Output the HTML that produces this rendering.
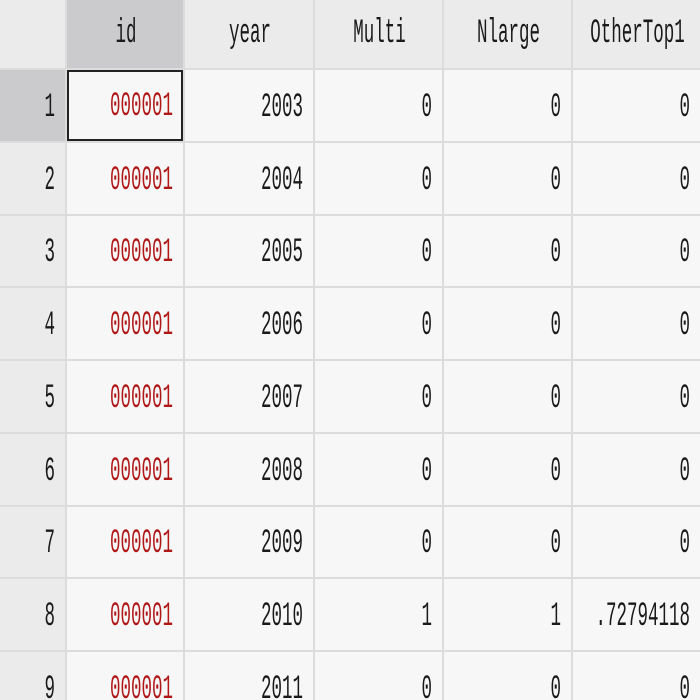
<!DOCTYPE html>
<html><head><style>
html{width:700px;height:700px;overflow:hidden;background:#f7f7f7;}
body{margin:0;width:700px;height:700px;overflow:hidden;background:#f7f7f7;position:relative;font-family:"Liberation Mono",monospace;}
.c{position:absolute;box-sizing:border-box;display:flex;align-items:center;justify-content:flex-end;padding-right:10px;padding-top:4px;font-size:17.5px;color:#1a1a1a;overflow:hidden;}
.c span{display:inline-block;transform:scaleY(1.95);}
.h{background:#ebebeb;justify-content:center;padding:0 0 0 2px;}
.r{background:#ebebeb;}
.red{color:#b01818;}
.vl{position:absolute;top:0;height:700px;width:2px;background:#dcdcdc;}
.hl{position:absolute;left:0;width:700px;height:2px;background:#dcdcdc;}
</style></head><body>
<div id="g"></div>
<script>
const cols=[0,67,185,315,444,573,702];
const hdr=["","id","year","Multi","Nlarge","OtherTop1"];
const data=[["2003",0,0,0],["2004",0,0,0],["2005",0,0,0],["2006",0,0,0],["2007",0,0,0],["2008",0,0,0],["2009",0,0,0],["2010",1,1,".72794118"],["2011",0,0,0]];
let h="";
const rowTop=i=>i==0?0:Math.round(70+(i-1)*72.75);
const rowBot=i=>i==0?68:Math.round(70+i*72.75)-2;
for(let r=0;r<=9;r++){
 for(let c=0;c<6;c++){
  let x=cols[c],w=cols[c+1]-cols[c]-2,y=rowTop(r),hh=rowBot(r)-y;
  let cls="c",txt="";
  if(r==0){cls+=" h";txt=hdr[c];}
  else if(c==0){cls+=" r";txt=r;}
  else if(c==1){cls+=" red";txt="000001";}
  else txt=data[r-1][c-2];
  let st=`left:${x}px;top:${y}px;width:${w}px;height:${hh}px;`;
  if(r==0&&c==1)st+="background:#cbcbcd;";
  if(r==1&&c==0)st+="background:#cbcbcd;";
  if(r==1&&c==1)st+="border:2px solid #222;padding-right:8px;padding-top:2px;";
  h+=`<div class="${cls}" style="${st}"><span>${txt}</span></div>`;
 }
}
for(let c=1;c<6;c++)h+=`<div class="vl" style="left:${cols[c]-2}px"></div>`;
for(let r=1;r<=9;r++)h+=`<div class="hl" style="top:${rowTop(r)-2}px"></div>`;
document.getElementById("g").innerHTML=h;
</script>
</body></html>
